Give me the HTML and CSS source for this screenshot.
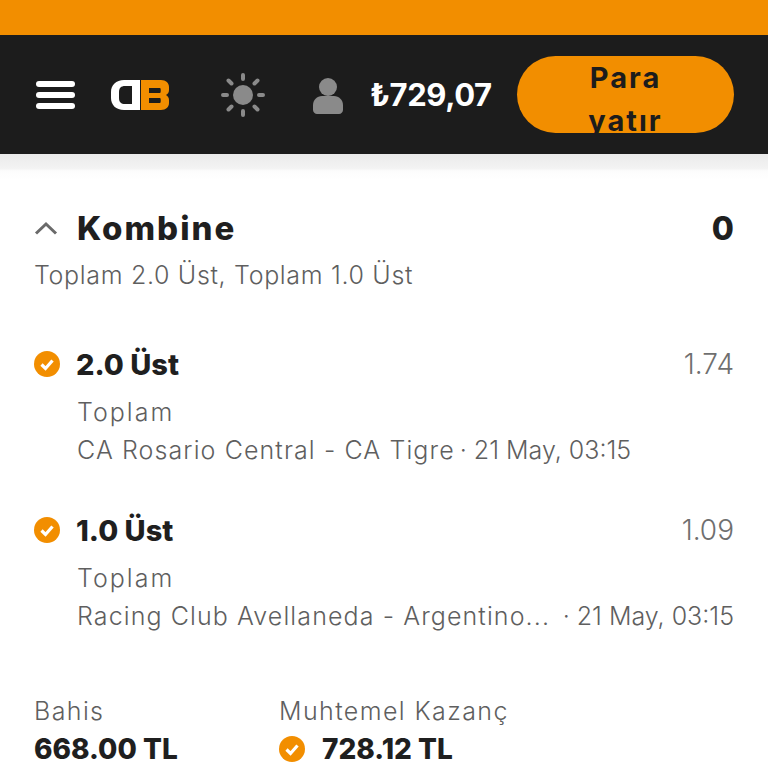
FILE: index.html
```html
<!DOCTYPE html>
<html lang="tr">

<head>
  <meta charset="UTF-8" />
  <meta name="viewport" content="width=device-width, initial-scale=1" />
  <title>Kombine</title>
  <link rel="stylesheet" href="styles.css">
</head>

<body>
  <div class="top-strip"></div>

  <header class="header">
    <div class="burger"><span></span><span></span><span></span></div>

    <svg class="logo" viewBox="0 0 60 32" width="60" height="32">
      <path fill="#fff" fill-rule="evenodd" d="M14 1h16v30H14C6 31 1 26 1 19v-6C1 6 6 1 14 1zM15 7c-4 0-6 2-6 6v6c0 4 2 6 6 6h7V7z" />
      <path fill="#f28e00" fill-rule="evenodd" d="M31 1h20c5 0 8 3 8 7v3c0 2-1 4-3 5 2 1 3 3 3 5v3c0 4-3 7-8 7H31zM39 9v5h11c1 0 1-5 0-5zM39 19v5h11c1 0 1-5 0-5z" />
    </svg>

    <svg class="sun" viewBox="0 0 44 44" width="44" height="44">
      <circle cx="22" cy="22" r="10" fill="#8a8a8a" />
      <g stroke="#8a8a8a" stroke-width="4" stroke-linecap="round">
        <path d="M22 2v4M22 38v4M2 22h4M38 22h4M7.5 7.5l3 3M33.5 33.5l3 3M36.5 7.5l-3 3M10.5 33.5l-3 3" />
      </g>
    </svg>

    <svg class="user" viewBox="0 0 30 36" width="30" height="36">
      <circle cx="15" cy="9" r="9" fill="#8a8a8a" />
      <path fill="#8a8a8a" d="M9 18h12c5 0 9 4 9 9v5c0 2-2 4-4 4H4c-2 0-4-2-4-4v-5c0-5 4-9 9-9z" />
    </svg>

    <span class="balance">₺729,07</span>
    <button class="deposit">Para yatır</button>
  </header>
  <div class="header-shadow"></div>

  <main class="content">
    <section class="combo">
      <div class="combo-head">
        <svg class="chevron" viewBox="0 0 24 14" width="24" height="14">
          <path d="M2 12.5L12 3l10 9.5" fill="none" stroke="#6a6a6a" stroke-width="3" />
        </svg>
        <h1 class="combo-title">Kombine</h1>
        <span class="combo-count">0</span>
      </div>
      <p class="combo-sub">Toplam 2.0 Üst, Toplam 1.0 Üst</p>
    </section>

    <section class="pick">
      <div class="pick-head">
        <svg class="check" viewBox="0 0 26 26" width="26" height="26">
          <circle cx="13" cy="13" r="13" fill="#f28e00" />
          <path d="M7.5 13.5l4 4 7-8" fill="none" stroke="#fff" stroke-width="3.2" />
        </svg>
        <span class="pick-name">2.0 Üst</span>
        <span class="pick-odds">1.74</span>
      </div>
      <div class="pick-market">Toplam</div>
      <div class="pick-match">
        <span class="pick-teams">CA Rosario Central - CA Tigre</span>
        <span class="pick-date">· 21 May, 03:15</span>
      </div>
    </section>

    <section class="pick">
      <div class="pick-head">
        <svg class="check" viewBox="0 0 26 26" width="26" height="26">
          <circle cx="13" cy="13" r="13" fill="#f28e00" />
          <path d="M7.5 13.5l4 4 7-8" fill="none" stroke="#fff" stroke-width="3.2" />
        </svg>
        <span class="pick-name">1.0 Üst</span>
        <span class="pick-odds">1.09</span>
      </div>
      <div class="pick-market">Toplam</div>
      <div class="pick-match">
        <span class="pick-teams">Racing Club Avellaneda - Argentino...</span>
        <span class="pick-date pick-date-end">· 21 May, 03:15</span>
      </div>
    </section>

    <section class="totals">
      <div class="total-stake">
        <div class="total-label">Bahis</div>
        <div class="total-value">668.00 TL</div>
      </div>
      <div class="total-win">
        <div class="total-label">Muhtemel Kazanç</div>
        <div class="total-value">
          <svg class="check" viewBox="0 0 26 26" width="26" height="26">
            <circle cx="13" cy="13" r="13" fill="#f28e00" />
            <path d="M7.5 13.5l4 4 7-8" fill="none" stroke="#fff" stroke-width="3.2" />
          </svg>
          728.12 TL
        </div>
      </div>
    </section>
  </main>
</body>

</html>
```

FILE: styles.css
```css
* {
  margin: 0;
  padding: 0;
  box-sizing: border-box;
}

body {
  font-family: 'Inter', 'Noto Sans', sans-serif;
  background-color: #fff;
  color: #1f1f1f;
  height: 768px;
  overflow: hidden;
}

.top-strip {
  height: 35px;
  background-color: #f28e00;
}

.header {
  height: 119px;
  background-color: #1c1c1c;
  display: flex;
  align-items: center;
  padding: 0 34px 0 36px;
}

.burger {
  width: 39px;
  display: flex;
  flex-direction: column;
  gap: 5px;
}

.burger span {
  height: 6px;
  border-radius: 3px;
  background-color: #fff;
}

.logo {
  margin-left: 35px;
}

.sun {
  margin-left: 51px;
}

.user {
  margin: 3px 0 0 48px;
}

.balance {
  margin-left: 27px;
  font-size: 31px;
  font-weight: 700;
  color: #fff;
  white-space: nowrap;
  letter-spacing: -0.4px;
}

.deposit {
  margin-left: auto;
  width: 217px;
  height: 77px;
  border: none;
  border-radius: 39px;
  background-color: #f28e00;
  color: #1c1c1c;
  font-family: inherit;
  font-size: 29px;
  font-weight: 700;
  letter-spacing: 2px;
  line-height: 43px;
  padding: 0 60px 4px;
}

.header-shadow {
  height: 26px;
  background: linear-gradient(#eaeaea, #f3f3f3 55%, #fcfcfc 65%, #fff);
}

.content {
  padding: 0 34px;
}

.combo {
  padding-top: 29px;
}

.combo-head {
  display: flex;
  align-items: center;
  height: 38px;
}

.chevron {
  margin-right: 19px;
}

.combo-title {
  font-size: 33px;
  font-weight: 800;
  letter-spacing: 2px;
}

.combo-count {
  margin-left: auto;
  font-size: 32px;
  font-weight: 800;
}

.combo-sub {
  margin-top: 9px;
  font-size: 25px;
  font-weight: 300;
  letter-spacing: 0.67px;
  line-height: 38px;
  color: #5f5f5f;
}

.pick {
  padding-top: 51px;
}

.pick + .pick {
  padding-top: 42px;
}

.pick-head {
  display: flex;
  align-items: center;
  height: 38px;
}

.pick-name {
  margin-left: 16px;
  font-size: 29px;
  font-weight: 800;
}

.pick-odds {
  margin-left: auto;
  font-size: 28px;
  font-weight: 300;
  color: #6f6f6f;
}

.pick-market {
  margin: 10px 0 0 43px;
  font-size: 25px;
  font-weight: 300;
  letter-spacing: 2px;
  line-height: 38px;
  color: #5f5f5f;
}

.pick-match {
  margin-left: 43px;
  display: flex;
  font-size: 25px;
  font-weight: 300;
  line-height: 38px;
  color: #5f5f5f;
  white-space: nowrap;
}

.pick-teams {
  letter-spacing: 1.1px;
}

.pick-date {
  margin-left: 5px;
}

.pick-date-end {
  margin-left: auto;
}

.totals {
  display: flex;
  padding-top: 57px;
}

.total-stake {
  width: 245px;
}

.total-label {
  font-size: 25px;
  font-weight: 300;
  letter-spacing: 1.4px;
  line-height: 38px;
  color: #5f5f5f;
}

.total-value {
  display: flex;
  align-items: center;
  font-size: 28px;
  line-height: 38px;
  font-weight: 800;
}

.total-value .check {
  margin-right: 17px;
}
```
